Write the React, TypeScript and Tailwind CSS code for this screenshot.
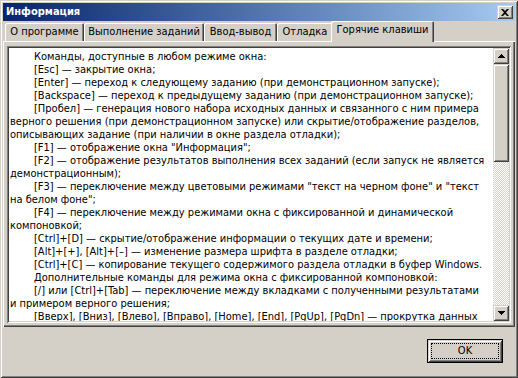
import React from 'react';

const raised =
  'shadow-[inset_1px_1px_#d4d0c8,inset_-1px_-1px_#404040,inset_2px_2px_#ffffff,inset_-2px_-2px_#808080]';

const lines: { t: string; i?: boolean }[] = [
  { t: 'Команды, доступные в любом режиме окна:', i: true },
  { t: '[Esc] — закрытие окна;', i: true },
  { t: '[Enter] — переход к следующему заданию (при демонстрационном запуске);', i: true },
  { t: '[Backspace] — переход к предыдущему заданию (при демонстрационном запуске);', i: true },
  { t: '[Пробел] — генерация нового набора исходных данных и связанного с ним примера', i: true },
  { t: 'верного решения (при демонстрационном запуске) или скрытие/отображение разделов,' },
  { t: 'описывающих задание (при наличии в окне раздела отладки);' },
  { t: '[F1] — отображение окна "Информация";', i: true },
  { t: '[F2] — отображение результатов выполнения всех заданий (если запуск не является', i: true },
  { t: 'демонстрационным);' },
  { t: '[F3] — переключение между цветовыми режимами "текст на черном фоне" и "текст', i: true },
  { t: 'на белом фоне";' },
  { t: '[F4] — переключение между режимами окна с фиксированной и динамической', i: true },
  { t: 'компоновкой;' },
  { t: '[Ctrl]+[D] — скрытие/отображение информации о текущих дате и времени;', i: true },
  { t: '[Alt]+[+], [Alt]+[–] — изменение размера шрифта в разделе отладки;', i: true },
  { t: '[Ctrl]+[C] — копирование текущего содержимого раздела отладки в буфер Windows.', i: true },
  { t: 'Дополнительные команды для режима окна с фиксированной компоновкой:', i: true },
  { t: '[/] или [Ctrl]+[Tab] — переключение между вкладками с полученными результатами', i: true },
  { t: 'и примером верного решения;' },
  { t: '[Вверх], [Вниз], [Влево], [Вправо], [Home], [End], [PgUp], [PgDn] — прокрутка данных', i: true },
];

const tabs = [
  { label: 'О программе', w: 'w-[79px]' },
  { label: 'Выполнение заданий', w: 'w-[120px]' },
  { label: 'Ввод-вывод', w: 'w-[73px]' },
  { label: 'Отладка', w: 'w-[56px]' },
];

function Arrow({ down }: { down?: boolean }) {
  return (
    <svg width="7" height="4" viewBox="0 0 7 4" className={down ? 'rotate-180' : ''}>
      <path d="M3 0h1v1h1v1h1v1h1v1H0V3h1V2h1V1h1z" fill="#000" />
    </svg>
  );
}

export default function App() {
  return (
    <div
      className={`w-[518px] h-[378px] bg-[#d4d0c8] p-[3px] flex flex-col text-[11px] text-black ${raised}`}
      style={{ fontFamily: '"DejaVu Sans Condensed", "Liberation Sans", sans-serif' }}
    >
      {/* title bar */}
      <div className="h-[18px] flex items-center justify-between pl-[3px] pr-[2px] bg-gradient-to-r from-[#0a246a] to-[#a6caf0]">
        <span className="font-bold text-white">Информация</span>
        <div className={`w-[16px] h-[14px] bg-[#d4d0c8] flex items-center justify-center ${raised}`}>
          <svg width="8" height="7" viewBox="0 0 8 7">
            <path d="M0 0h2l2 2 2-2h2L5 3.5 8 7H6L4 5 2 7H0l3-3.5z" fill="#000" />
          </svg>
        </div>
      </div>

      {/* tabs */}
      <div className="h-[20px] flex items-end pl-[2px]">
        {tabs.map((tab) => (
          <div
            key={tab.label}
            className={`${tab.w} h-[18px] flex items-center justify-center rounded-t-[2px] shadow-[inset_1px_1px_#ffffff,inset_-1px_0_#404040,inset_-2px_0_#808080]`}
          >
            {tab.label}
          </div>
        ))}
        <div className="relative z-10 w-[103px] h-[21px] -mx-[2px] -mb-[1px] pb-[3px] bg-[#d4d0c8] flex items-center justify-center rounded-t-[2px] shadow-[inset_1px_1px_#ffffff,inset_-1px_0_#404040,inset_-2px_0_#808080]">
          Горячие клавиши
        </div>
      </div>

      {/* panel */}
      <div className="h-[286px] px-[4px] pt-[5px] pb-[4px] shadow-[inset_1px_1px_#ffffff,inset_-1px_-1px_#404040,inset_-2px_-2px_#808080]">
        <div className="h-full bg-white p-[2px] flex shadow-[inset_1px_1px_#808080,inset_-1px_-1px_#ffffff,inset_2px_2px_#404040,inset_-2px_-2px_#d4d0c8]">
          <div className="flex-1 overflow-hidden pl-[1px] pt-[2px] leading-[13px] whitespace-nowrap">
            {lines.map((l, k) => (
              <div key={k} className={l.i ? 'pl-[24px]' : ''}>
                {l.t}
              </div>
            ))}
          </div>
          <div className="w-[16px] flex flex-col mr-[0px]">
            <div className={`h-[16px] bg-[#d4d0c8] flex items-center justify-center ${raised}`}>
              <Arrow />
            </div>
            <div className={`h-[98px] bg-[#d4d0c8] ${raised}`} />
            <div className="flex-1 bg-[repeating-conic-gradient(#ffffff_0_25%,#d4d0c8_0_50%)] bg-[length:2px_2px]" />
            <div className={`h-[16px] bg-[#d4d0c8] flex items-center justify-center ${raised}`}>
              <Arrow down />
            </div>
          </div>
        </div>
      </div>

      {/* footer */}
      <div className="flex justify-end pt-[12px] pr-[12px]">
        <div className="w-[76px] h-[24px] border border-black">
          <div className={`w-full h-full p-[3px] ${raised}`}>
            <div className="w-full h-full border border-dotted border-black flex items-center justify-center">
              OK
            </div>
          </div>
        </div>
      </div>
    </div>
  );
}
